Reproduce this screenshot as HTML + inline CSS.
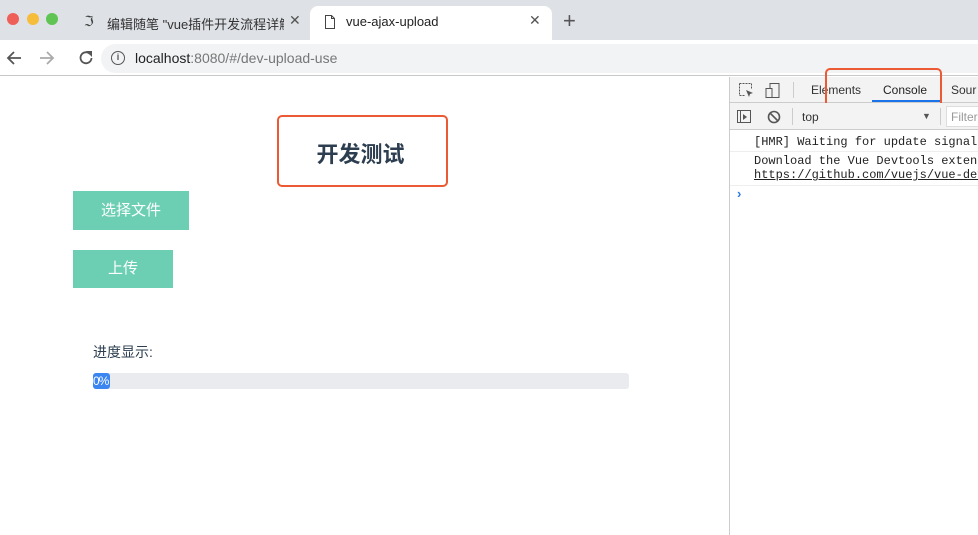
<!DOCTYPE html>
<html><head><meta charset="utf-8"><style>
*{margin:0;padding:0;box-sizing:border-box}
body{width:978px;height:535px;overflow:hidden;background:#fff;font-family:"Liberation Sans","Noto Sans CJK SC",sans-serif;position:relative}
.abs{position:absolute}
.dot{position:absolute;top:13px;width:12px;height:12px;border-radius:50%}
.mono{font-family:"Liberation Mono","Noto Sans CJK SC",monospace;font-size:12px;color:#222}
</style></head><body>
<div class="abs" style="left:0;top:0;width:978px;height:40px;background:#dee1e6"></div>
<div class="dot" style="left:7px;background:#ee5f57"></div>
<div class="dot" style="left:27px;background:#f6bd3b"></div>
<div class="dot" style="left:46px;background:#5fc454"></div>
<div class="abs" style="left:84px;top:13px;font-size:14px;color:#444">ℑ</div>
<div class="abs" style="left:107px;top:14px;font-size:13px;color:#333;width:177px;overflow:hidden;white-space:nowrap">编辑随笔 "vue插件开发流程详解</div>
<div class="abs" style="left:289px;top:12px;font-size:14px;color:#555">✕</div>
<div class="abs" style="left:310px;top:6px;width:242px;height:36px;background:#fff;border-radius:8px 8px 0 0"></div>
<svg class="abs" style="left:324px;top:15px" width="12" height="14"><path d="M1.5 .5h6l3 3v10h-9z M7.5 .5v3h3" fill="none" stroke="#444"/></svg>
<div class="abs" style="left:346px;top:14px;font-size:13px;color:#222">vue-ajax-upload</div>
<div class="abs" style="left:529px;top:12px;font-size:14px;color:#555">✕</div>
<div class="abs" style="left:563px;top:8px;font-size:22px;color:#555;font-weight:300">+</div>
<div class="abs" style="left:0;top:40px;width:978px;height:36px;background:#fff;border-bottom:1px solid #c8c8c8"></div>
<svg class="abs" style="left:6px;top:50px" width="100" height="16"><path d="M15 8H2M8 2L2 8l6 6" fill="none" stroke="#555" stroke-width="1.8"/><path d="M34 8h13M41 2l6 6-6 6" fill="none" stroke="#aaa" stroke-width="1.8"/><path d="M84 4a5.5 5.5 0 1 0 1.5 4" fill="none" stroke="#555" stroke-width="1.8"/><path d="M80 1h6v6z" fill="#555"/></svg>
<div class="abs" style="left:101px;top:44px;width:890px;height:29px;background:#f1f3f4;border-radius:15px"></div>
<div class="abs" style="left:111px;top:51px;width:14px;height:14px;border:1.5px solid #555;border-radius:50%;font-size:9px;text-align:center;line-height:11px;color:#555;font-weight:bold">i</div>
<div class="abs" style="left:135px;top:50px;font-size:14px;color:#222">localhost<span style="color:#777">:8080/#/dev-upload-use</span></div>

<div class="abs" style="left:277px;top:115px;width:171px;height:72px;border:2px solid #eb5a35;border-radius:5px"></div>
<div class="abs" style="left:275px;top:137px;width:171px;text-align:center;font-size:22px;font-weight:bold;color:#2c3e50">开发测试</div>
<div class="abs" style="left:73px;top:191px;width:116px;height:39px;background:#6ccfb3;color:#fff;font-size:15px;text-align:center;line-height:39px">选择文件</div>
<div class="abs" style="left:73px;top:250px;width:100px;height:38px;background:#6ccfb3;color:#fff;font-size:15px;text-align:center;line-height:38px">上传</div>
<div class="abs" style="left:93px;top:342px;font-size:14px;color:#2c3e50">进度显示:</div>
<div class="abs" style="left:93px;top:373px;width:536px;height:16px;background:#e9ebee;border-radius:3px"></div>
<div class="abs" style="left:93px;top:373px;width:17px;height:16px;background:#3a85f0;border-radius:3px;color:#fff;font-size:12px;line-height:16px;letter-spacing:-1px">0%</div>

<div class="abs" style="left:729px;top:77px;width:249px;height:458px;background:#fff;border-left:1px solid #ccc"></div>
<div class="abs" style="left:730px;top:77px;width:248px;height:26px;background:#f3f3f3;border-bottom:1px solid #ccc"></div>
<svg class="abs" style="left:738px;top:82px" width="50" height="18"><path d="M1.5 1.5h12v5M1.5 1.5v12h5" fill="none" stroke="#555" stroke-dasharray="2 1"/><path d="M8 8l7 3-3 1-1 3z" fill="#555"/><rect x="32" y="1.5" width="9" height="14" fill="none" stroke="#555"/><rect x="28" y="6.5" width="6" height="9" fill="#f3f3f3" stroke="#555"/></svg>
<div class="abs" style="left:793px;top:82px;width:1px;height:16px;background:#ccc"></div>
<div class="abs" style="left:811px;top:83px;font-size:12px;color:#333">Elements</div>
<div class="abs" style="left:883px;top:83px;font-size:12px;color:#222">Console</div>
<div class="abs" style="left:872px;top:100px;width:68px;height:2px;background:#1a73e8"></div>
<div class="abs" style="left:951px;top:83px;font-size:12px;color:#333">Sour</div>
<div class="abs" style="left:825px;top:68px;width:117px;height:40px;border:2px solid #eb5a35;border-radius:5px"></div>
<div class="abs" style="left:730px;top:103px;width:248px;height:27px;background:#f3f3f3;border-bottom:1px solid #ccc"></div>
<svg class="abs" style="left:737px;top:109px" width="50" height="16"><rect x=".5" y="1.5" width="13" height="12" fill="none" stroke="#555"/><path d="M3.5 2v11" stroke="#555"/><path d="M6 5l4 3-4 3z" fill="#555"/><circle cx="37" cy="8" r="5.5" fill="none" stroke="#555" stroke-width="1.6"/><path d="M33 4l8 8" stroke="#555" stroke-width="1.6"/></svg>
<div class="abs" style="left:792px;top:108px;width:1px;height:17px;background:#ccc"></div>
<div class="abs" style="left:802px;top:110px;font-size:12px;color:#333">top</div>
<div class="abs" style="left:922px;top:111px;font-size:9px;color:#555">▼</div>
<div class="abs" style="left:940px;top:108px;width:1px;height:17px;background:#ccc"></div>
<div class="abs" style="left:946px;top:106px;width:40px;height:21px;background:#fff;border:1px solid #ddd"></div>
<div class="abs" style="left:951px;top:110px;font-size:12px;color:#999">Filter</div>
<div class="abs mono" style="left:754px;top:135px;white-space:nowrap">[HMR] Waiting for update signal</div>
<div class="abs" style="left:730px;top:151px;width:248px;height:1px;background:#eee"></div>
<div class="abs mono" style="left:754px;top:154px;white-space:nowrap">Download the Vue Devtools extens</div>
<div class="abs mono" style="left:754px;top:168px;white-space:nowrap;text-decoration:underline">https://github.com/vuejs/vue-dev</div>
<div class="abs" style="left:730px;top:185px;width:248px;height:1px;background:#eee"></div>
<div class="abs" style="left:737px;top:186px;font-size:13px;color:#2a7ae2;font-weight:bold">›</div>
</body></html>
